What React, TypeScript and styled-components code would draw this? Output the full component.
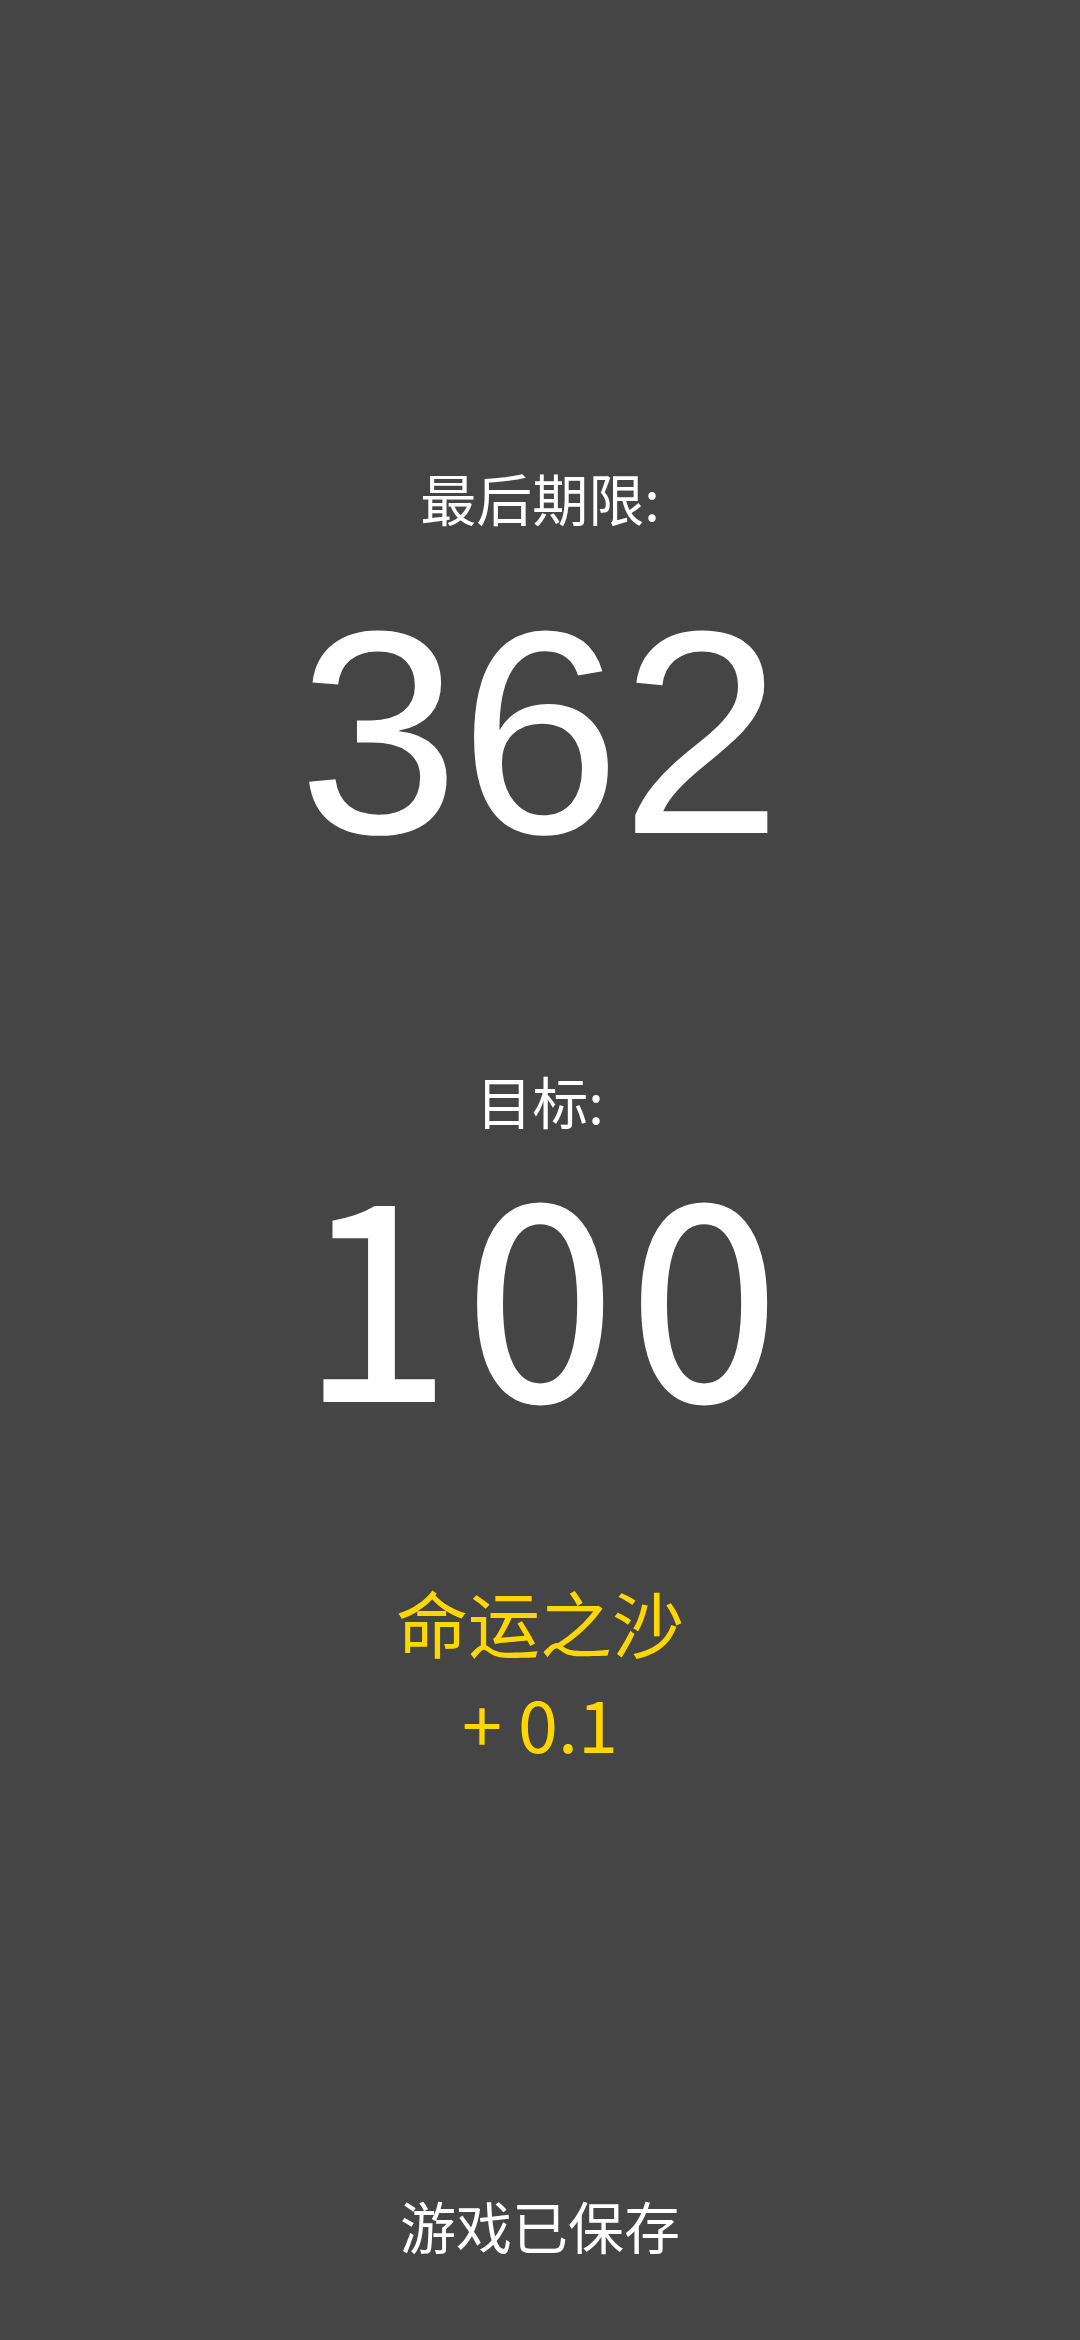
import React from 'react';
import styled, { createGlobalStyle } from 'styled-components';

const GlobalStyle = createGlobalStyle`
  html, body {
    margin: 0;
    padding: 0;
    background: #454545;
  }
`;

const Screen = styled.div`
  display: flex;
  flex-direction: column;
  align-items: center;
  min-height: 2340px;
  padding-top: 463px;
  box-sizing: border-box;
  background: #454545;
  font-family: "Noto Sans CJK SC", "Noto Sans", sans-serif;
  color: #ffffff;
`;

const Stat = styled.section<{ $gap: number; $top?: number }>`
  display: flex;
  flex-direction: column;
  align-items: center;
  gap: ${(p) => p.$gap}px;
  margin-top: ${(p) => p.$top ?? 0}px;
`;

const Label = styled.div`
  font-size: 56px;
  line-height: 67px;
`;

const BigNumber = styled.div<{ $arial?: boolean }>`
  font-family: ${(p) => (p.$arial ? '"Liberation Sans", Arial' : '"Noto Sans CJK SC"')}, sans-serif;
  font-size: ${(p) => (p.$arial ? 290 : 272)}px;
  line-height: 288px;
  ${(p) =>
    p.$arial
      ? ''
      : `
    letter-spacing: 13px;
    padding-left: 13px;
    -webkit-text-stroke: 2px #ffffff;
  `}
`;

const Bonus = styled.section`
  display: flex;
  flex-direction: column;
  align-items: center;
  margin-top: 144px;
  color: #ffd700;
  font-size: 72px;
  line-height: 101px;
`;

const Footer = styled.footer`
  margin-top: auto;
  padding-bottom: 82px;
  font-size: 56px;
  line-height: 67px;
`;

export default function App() {
  return (
    <>
      <GlobalStyle />
      <Screen>
        <Stat $gap={58}>
          <Label>最后期限:</Label>
          <BigNumber $arial>362</BigNumber>
        </Stat>
        <Stat $gap={5} $top={190}>
          <Label>目标:</Label>
          <BigNumber>100</BigNumber>
        </Stat>
        <Bonus>
          <div>命运之沙</div>
          <div>+ 0.1</div>
        </Bonus>
        <Footer>游戏已保存</Footer>
      </Screen>
    </>
  );
}
